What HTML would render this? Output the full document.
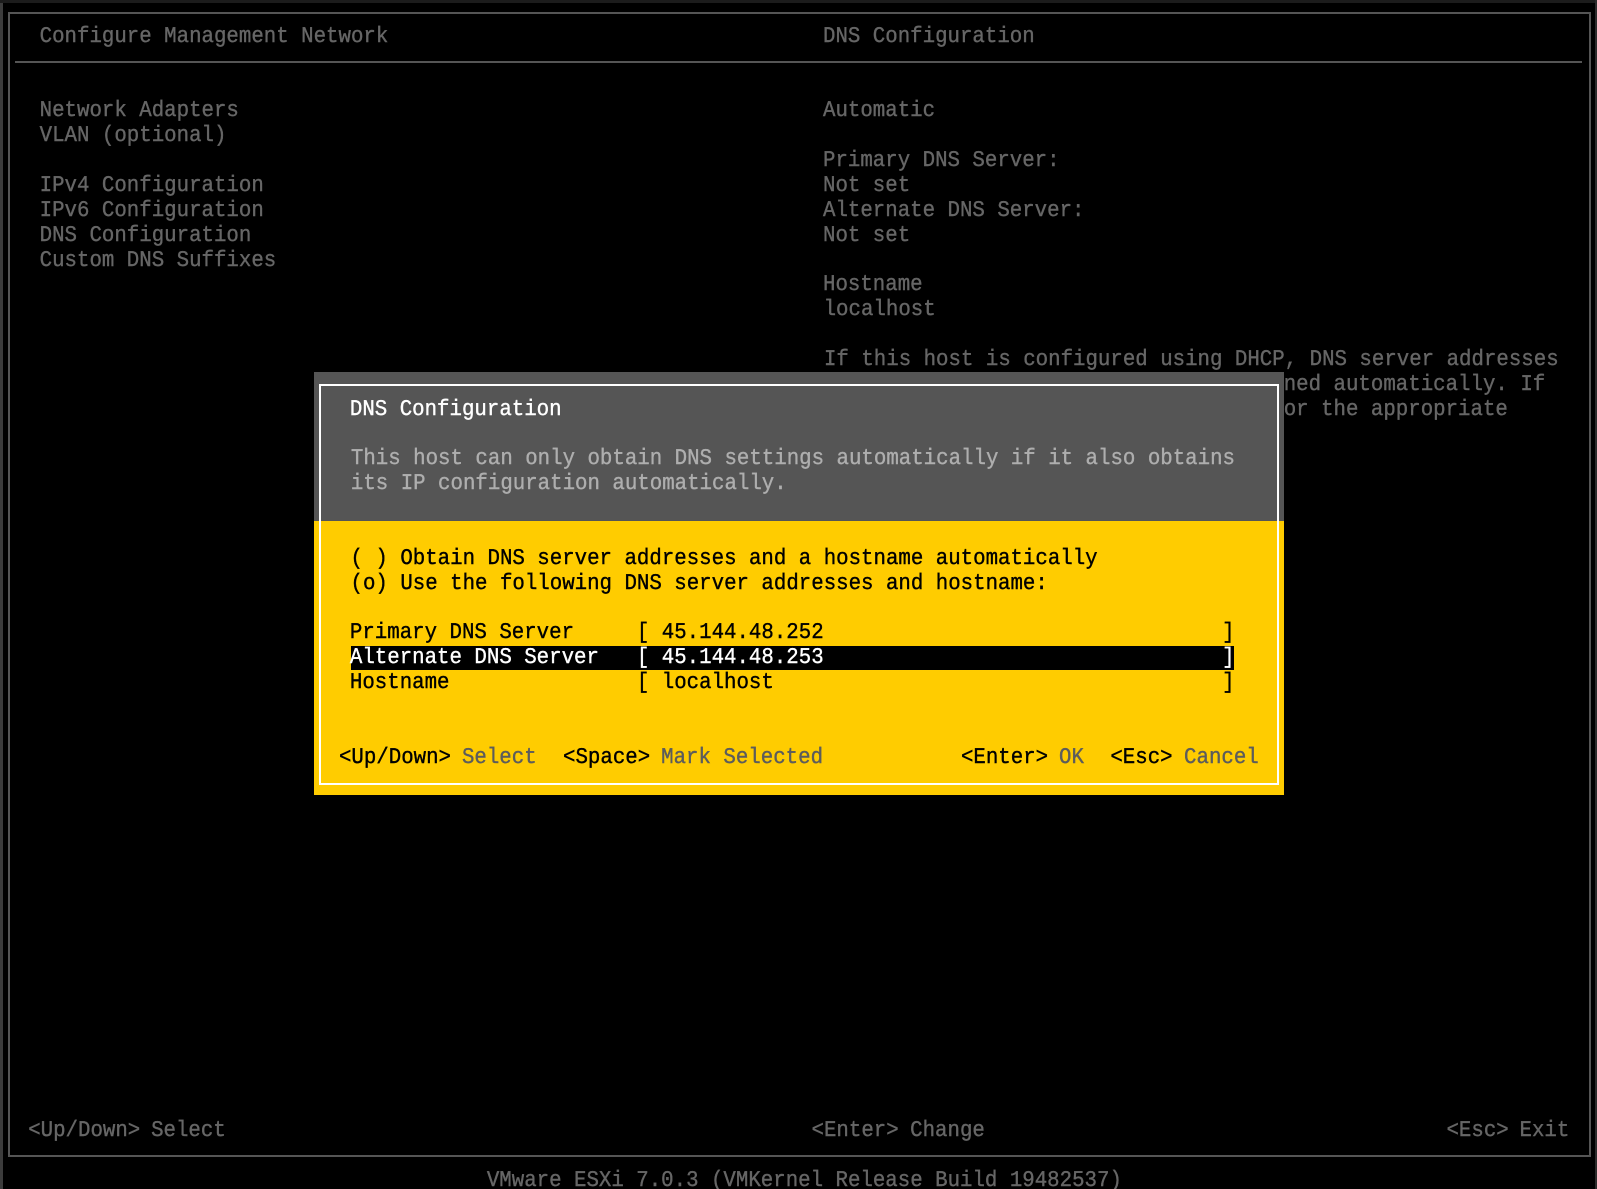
<!DOCTYPE html>
<html><head><meta charset="utf-8"><title>DNS Configuration</title>
<style>
html,body{margin:0;padding:0;background:#000;}
#s{position:relative;width:1597px;height:1189px;overflow:hidden;background:#000;}
.b{position:absolute;}
.t{position:absolute;left:calc(1.3px + var(--c)*12.45px);top:calc(25.7px + var(--k)*24.87px);
font:20.75px/24px "Liberation Mono",monospace;white-space:pre;text-rendering:geometricPrecision;
transform:scaleY(1.08);transform-origin:0 17.5px;color:#666;-webkit-text-stroke:.35px currentColor;filter:blur(.3px);}
.w{color:#fff}.g{color:#aeaeae}.n{color:#000}.h{color:#5c5c5c}
</style></head><body><div id="s">
<div class="b" style="left:0;top:0;width:3px;height:1189px;background:#3c3c3c"></div>
<div class="b" style="left:0;top:0;width:1597px;height:3px;background:#1c1c1c"></div>
<div class="b" style="left:1595px;top:0;width:2px;height:1189px;background:#2c2c2c"></div>
<div class="b" style="left:8px;top:12px;width:1579px;height:1141px;border:2px solid #555"></div>
<div class="b" style="left:15px;top:61px;width:1567px;height:2px;background:#555"></div>

<div class="t" style="--c:3.08;--k:0">Configure Management Network</div>
<div class="t" style="--c:66;--k:0">DNS Configuration</div>
<div class="t" style="--c:3.08;--k:3">Network Adapters</div>
<div class="t" style="--c:3.08;--k:4">VLAN (optional)</div>
<div class="t" style="--c:3.08;--k:6">IPv4 Configuration</div>
<div class="t" style="--c:3.08;--k:7">IPv6 Configuration</div>
<div class="t" style="--c:3.08;--k:8">DNS Configuration</div>
<div class="t" style="--c:3.08;--k:9">Custom DNS Suffixes</div>
<div class="t" style="--c:66;--k:3">Automatic</div>
<div class="t" style="--c:66;--k:5">Primary DNS Server:</div>
<div class="t" style="--c:66;--k:6">Not set</div>
<div class="t" style="--c:66;--k:7">Alternate DNS Server:</div>
<div class="t" style="--c:66;--k:8">Not set</div>
<div class="t" style="--c:66;--k:10">Hostname</div>
<div class="t" style="--c:66.05;--k:11">localhost</div>
<div class="t" style="--c:66.08;--k:13">If this host is configured using DHCP, DNS server addresses</div>
<div class="t" style="--c:66;--k:14">and other DNS parameters can be obtained automatically. If</div>
<div class="t" style="--c:66;--k:15">not, ask your network administrator for the appropriate</div>

<div class="t" style="--c:2.16;--k:44">&lt;Up/Down&gt;</div>
<div class="t" style="--c:12.03;--k:44">Select</div>
<div class="t" style="--c:65.08;--k:44">&lt;Enter&gt;</div>
<div class="t" style="--c:73;--k:44">Change</div>
<div class="t" style="--c:116.08;--k:44">&lt;Esc&gt;</div>
<div class="t" style="--c:122;--k:44;left:1519.5px">Exit</div>
<div class="t" style="--c:39;--k:46">VMware ESXi 7.0.3 (VMKernel Release Build 19482537)</div>

<div class="b" style="left:314px;top:372px;width:970px;height:149px;background:#555"></div>
<div class="b" style="left:314px;top:521px;width:970px;height:274px;background:#fc0"></div>
<div class="b" style="left:319px;top:384px;width:956px;height:397px;border:2px solid #fff"></div>

<div class="t w" style="--c:28;--k:15">DNS Configuration</div>
<div class="t g" style="--c:28.08;--k:17">This host can only obtain DNS settings automatically if it also obtains</div>
<div class="t g" style="--c:28.08;--k:18">its IP configuration automatically.</div>
<div class="t n" style="--c:28.05;--k:21">( ) Obtain DNS server addresses and a hostname automatically</div>
<div class="t n" style="--c:28.05;--k:22">(o) Use the following DNS server addresses and hostname:</div>
<div class="b" style="left:351px;top:646px;width:883px;height:24px;background:#000"></div>
<div class="t n" style="--c:28;--k:23.98">Primary DNS Server</div>
<div class="t n" style="--c:51.05;--k:23.98">[ 45.144.48.252</div>
<div class="t n" style="--c:98.06;--k:23.98">]</div>
<div class="t w" style="--c:28;--k:25">Alternate DNS Server</div>
<div class="t w" style="--c:51.05;--k:25">[ 45.144.48.253</div>
<div class="t w" style="--c:98.06;--k:25">]</div>
<div class="t n" style="--c:28;--k:26">Hostname</div>
<div class="t n" style="--c:51.05;--k:26">[ localhost</div>
<div class="t n" style="--c:98.06;--k:26">]</div>
<div class="t n" style="--c:27.12;--k:29">&lt;Up/Down&gt;</div>
<div class="t h" style="--c:37;--k:29">Select</div>
<div class="t n" style="--c:45.12;--k:29">&lt;Space&gt;</div>
<div class="t h" style="--c:53;--k:29">Mark Selected</div>
<div class="t n" style="--c:77.08;--k:29">&lt;Enter&gt;</div>
<div class="t h" style="--c:84.96;--k:29">OK</div>
<div class="t n" style="--c:89.08;--k:29">&lt;Esc&gt;</div>
<div class="t h" style="--c:95;--k:29">Cancel</div>
</div></body></html>
